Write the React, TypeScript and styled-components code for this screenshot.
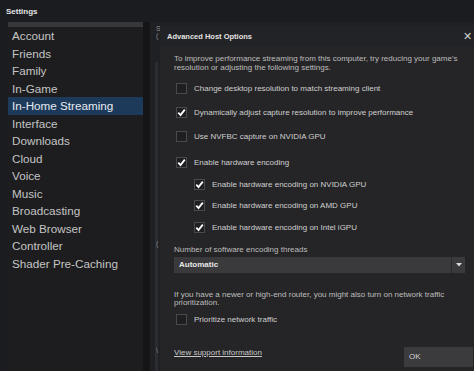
import React from "react";
import styled, { createGlobalStyle } from "styled-components";

const Global = createGlobalStyle`
  html, body { margin: 0; padding: 0; background: #1b1c20; }
  body { font-family: "Liberation Sans", Arial, sans-serif; }
`;

const Window = styled.div`
  position: relative;
  width: 474px;
  height: 371px;
  overflow: hidden;
  background: #1b1c20;
  display: flex;
  flex-direction: column;
`;

const TitleBar = styled.div`
  height: 22px;
  display: flex;
  align-items: center;
  padding-left: 6px;
  font-size: 8px;
  font-weight: bold;
  color: #e4e4e4;
  flex: none;
`;

const Main = styled.div`
  flex: 1;
  display: flex;
  padding-left: 8px;
`;

const Sidebar = styled.div`
  width: 135px;
  background: #1d1d1f;
  display: flex;
  flex-direction: column;
  border-top: 5px solid #38383a;
`;

const NavItem = styled.div<{ $active?: boolean }>`
  height: 17.5px;
  display: flex;
  align-items: center;
  padding-left: 4px;
  font-size: 11.7px;
  color: ${(p) => (p.$active ? "#e6ebf0" : "#c4c4c4")};
  background: ${(p) => (p.$active ? "#1e3a5b" : "transparent")};
  white-space: nowrap;
`;

const Gutter = styled.div`
  width: 7px;
  background: #151518;
`;

const Backdrop = styled.div`
  flex: 1;
  background: #1f2023;
  position: relative;
`;

const ScrollTrack = styled.div`
  position: absolute;
  left: 5px;
  top: 40px;
  bottom: 0;
  width: 3px;
  background: #2c2d30;
`;

const Glyph = styled.span<{ $top: number }>`
  position: absolute;
  left: 6px;
  top: ${(p) => p.$top}px;
  font-size: 7px;
  color: #8a8a8a;
`;

const Dialog = styled.div`
  position: absolute;
  left: 160px;
  top: 26px;
  right: 0;
  bottom: 0;
  background: #252527;
  display: flex;
  flex-direction: column;
`;

const DialogHeader = styled.div`
  height: 20px;
  display: flex;
  align-items: center;
  justify-content: space-between;
  padding: 0 2px 0 7px;
  background: #222326;
  font-size: 7.5px;
  font-weight: bold;
  color: #e2e2e2;
`;

const Close = styled.span`
  font-size: 11px;
  font-weight: normal;
  color: #d0d0d0;
  line-height: 1;
`;

const Body = styled.div`
  flex: 1;
  padding: 9px 0 0 14px;
  display: flex;
  flex-direction: column;
`;

const Para = styled.div<{ $mt?: number }>`
  font-size: 8px;
  line-height: 8.5px;
  color: #bdbdbd;
  margin-top: ${(p) => p.$mt ?? 0}px;
  padding-right: 10px;
`;

const Row = styled.div<{ $mt: number; $indent?: boolean }>`
  display: flex;
  align-items: center;
  gap: 7px;
  height: 11px;
  margin-top: ${(p) => p.$mt}px;
  margin-left: ${(p) => (p.$indent ? 20 : 2)}px;
  font-size: 8px;
  color: #cfcfcf;
`;

const Box = styled.span`
  width: 9px;
  height: 9px;
  border: 1px solid #4a4a4d;
  background: #1f1f21;
  display: flex;
  align-items: center;
  justify-content: center;
  flex: none;
`;

const Select = styled.div`
  margin-top: 2px;
  margin-right: 9px;
  height: 16px;
  background: #3a3a3d;
  display: flex;
  align-items: center;
  font-size: 8px;
  font-weight: bold;
  color: #e8e8e8;
`;

const SelectValue = styled.span`
  flex: 1;
  padding-left: 5px;
`;

const SelectArrow = styled.span`
  width: 13px;
  height: 100%;
  border-left: 1px solid #2a2a2c;
  display: flex;
  align-items: center;
  justify-content: center;
`;

const Footer = styled.div`
  margin-top: 22px;
  display: flex;
  justify-content: space-between;
  align-items: flex-start;
`;

const Link = styled.span`
  font-size: 8px;
  line-height: 9px;
  padding-top: 1px;
  color: #c8c8c8;
  text-decoration: underline;
`;

const OkButton = styled.div`
  width: 64px;
  height: 20px;
  background: #3b3b3e;
  display: flex;
  align-items: center;
  padding-left: 5px;
  font-size: 8px;
  color: #d4d4d4;
  margin-right: 1px;
`;

const Check = () => (
  <svg width="9" height="9" viewBox="0 0 9 9">
    <polyline points="1.3,4.6 3.5,7 7.8,1.6" fill="none" stroke="#ffffff" strokeWidth="1.8" />
  </svg>
);

const CheckRow = ({ label, checked, mt, indent }: { label: string; checked?: boolean; mt: number; indent?: boolean }) => (
  <Row $mt={mt} $indent={indent}>
    <Box>{checked && <Check />}</Box>
    <span>{label}</span>
  </Row>
);

const nav = [
  "Account",
  "Friends",
  "Family",
  "In-Game",
  "In-Home Streaming",
  "Interface",
  "Downloads",
  "Cloud",
  "Voice",
  "Music",
  "Broadcasting",
  "Web Browser",
  "Controller",
  "Shader Pre-Caching",
];

export default function App() {
  return (
    <>
      <Global />
      <Window>
        <TitleBar>Settings</TitleBar>
        <Main>
          <Sidebar>
            {nav.map((n) => (
              <NavItem key={n} $active={n === "In-Home Streaming"}>
                {n}
              </NavItem>
            ))}
          </Sidebar>
          <Gutter />
          <Backdrop>
            <ScrollTrack />
            <Glyph $top={3}>S</Glyph>
            <Glyph $top={10}>(</Glyph>
            <Glyph $top={218}>(</Glyph>
            <Glyph $top={325}>\</Glyph>
          </Backdrop>
        </Main>
        <Dialog>
          <DialogHeader>
            <span>Advanced Host Options</span>
            <Close>✕</Close>
          </DialogHeader>
          <Body>
            <Para>
              To improve performance streaming from this computer, try reducing your game's resolution or adjusting the
              following settings.
            </Para>
            <CheckRow mt={11} label="Change desktop resolution to match streaming client" />
            <CheckRow mt={13} checked label="Dynamically adjust capture resolution to improve performance" />
            <CheckRow mt={13} label="Use NVFBC capture on NVIDIA GPU" />
            <CheckRow mt={15} checked label="Enable hardware encoding" />
            <CheckRow mt={11} checked indent label="Enable hardware encoding on NVIDIA GPU" />
            <CheckRow mt={10} checked indent label="Enable hardware encoding on AMD GPU" />
            <CheckRow mt={11} checked indent label="Enable hardware encoding on Intel iGPU" />
            <Para $mt={13}>Number of software encoding threads</Para>
            <Select>
              <SelectValue>Automatic</SelectValue>
              <SelectArrow>
                <svg width="6" height="4" viewBox="0 0 6 4">
                  <polygon points="0,0 6,0 3,3.5" fill="#d8d8d8" />
                </svg>
              </SelectArrow>
            </Select>
            <Para $mt={18}>
              If you have a newer or high-end router, you might also turn on network traffic prioritization.
            </Para>
            <CheckRow mt={6} label="Prioritize network traffic" />
            <Footer>
              <Link>View support information</Link>
              <OkButton>OK</OkButton>
            </Footer>
          </Body>
        </Dialog>
      </Window>
    </>
  );
}
